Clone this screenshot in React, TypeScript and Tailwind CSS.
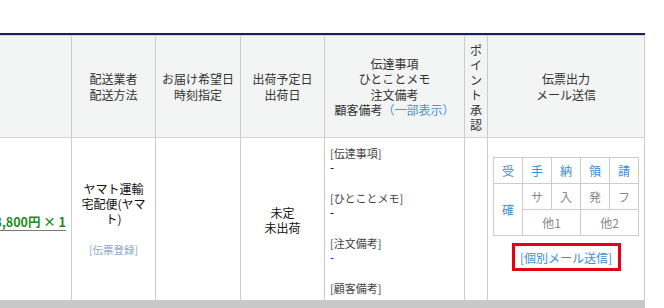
import React from "react";

const blue = "text-[#3a8ed4]";

function MiniCell({ children, className = "" }: { children: React.ReactNode; className?: string }) {
  return (
    <div className={"flex items-center justify-center border-r border-b border-[#cccccc] text-[12px] " + className}>
      {children}
    </div>
  );
}

export default function App() {
  return (
    <div className="w-[664px] h-[308px] overflow-hidden bg-white text-[#333] font-['Noto_Sans_CJK_JP','Noto_Sans',sans-serif]">
      <div className="h-[33px]" />
      <div className="w-[645px] h-[2px] bg-[#1e1f5e]" />
      {/* header row */}
      <div className="w-[645px] grid grid-cols-[72px_84px_85px_84px_140px_23px_157px] h-[103px] bg-[#f3f4f4] border-t border-b border-[#d4d4d4] text-[12px] leading-[15.5px] text-center">
        <div className="border-r border-[#cccccc]" />
        <div className="border-r border-[#cccccc] flex flex-col items-center justify-center">
          <div>配送業者</div>
          <div>配送方法</div>
        </div>
        <div className="border-r border-[#cccccc] flex flex-col items-center justify-center">
          <div>お届け希望日</div>
          <div>時刻指定</div>
        </div>
        <div className="border-r border-[#cccccc] flex flex-col items-center justify-center">
          <div>出荷予定日</div>
          <div>出荷日</div>
        </div>
        <div className="border-r border-[#cccccc] flex flex-col items-center justify-center">
          <div>伝達事項</div>
          <div>ひとことメモ</div>
          <div>注文備考</div>
          <div className="whitespace-nowrap">
            顧客備考<span className="text-[#4a95d2]">（一部表示）</span>
          </div>
        </div>
        <div className="border-r border-[#cccccc] flex flex-col items-center justify-center leading-[15px]">
          <div>ポ</div>
          <div>イ</div>
          <div>ン</div>
          <div>ト</div>
          <div>承</div>
          <div>認</div>
        </div>
        <div className="border-r border-[#cccccc] flex flex-col items-center justify-center">
          <div>伝票出力</div>
          <div>メール送信</div>
        </div>
      </div>
      {/* body row */}
      <div className="w-[645px] grid grid-cols-[72px_84px_85px_84px_140px_23px_157px] h-[162px] bg-white text-[12px] leading-[15px] text-[#111]">
        <div className="border-r border-[#cccccc] flex items-center justify-end pr-[5px] pt-[6px] overflow-visible">
          <span className="whitespace-nowrap border-b border-[#777] font-bold text-[#1d8a1d] text-[12.5px] leading-[17px]">
            3,800円 × 1
          </span>
        </div>
        <div className="border-r border-[#cccccc] flex flex-col items-center justify-center px-[6px] text-center">
          <div>ヤマト運輸</div>
          <div>宅配便(ヤマト)</div>
          <div className="mt-[16px] text-[10.5px] text-[#8ea7cb]">[伝票登録]</div>
        </div>
        <div className="border-r border-[#cccccc]" />
        <div className="border-r border-[#cccccc] flex flex-col items-center justify-center text-center pt-[1px]">
          <div>未定</div>
          <div>未出荷</div>
        </div>
        <div className="border-r border-[#cccccc] overflow-hidden pl-[5px] pt-[8px] text-[11px]">
          <div className="leading-[14px] text-[#444]">[伝達事項]</div>
          <div className="leading-[14px] mb-[17px] text-[12px] text-black">-</div>
          <div className="leading-[14px] text-[#444]">[ひとことメモ]</div>
          <div className="leading-[14px] mb-[17px] text-[12px] text-black">-</div>
          <div className="leading-[14px] text-[#444]">[注文備考]</div>
          <div className="leading-[14px] mb-[17px] text-[12px] text-[#1a1aff]">-</div>
          <div className="leading-[14px] text-[#444]">[顧客備考]</div>
          <div className="leading-[14px] text-[12px] text-black">-</div>
        </div>
        <div className="border-r border-[#cccccc]" />
        <div className="border-r border-[#cccccc] flex flex-col items-center pt-[19px]">
          <div className="grid grid-cols-[repeat(5,29px)] grid-rows-[repeat(3,26px)] w-[146px] border-l border-t border-[#cccccc]">
            <MiniCell className={blue}>受</MiniCell>
            <MiniCell className={blue}>手</MiniCell>
            <MiniCell className={blue}>納</MiniCell>
            <MiniCell className={blue}>領</MiniCell>
            <MiniCell className={blue}>請</MiniCell>
            <MiniCell className={"row-span-2 " + blue}>確</MiniCell>
            <MiniCell className="text-[#888]">サ</MiniCell>
            <MiniCell className="text-[#888]">入</MiniCell>
            <MiniCell className="text-[#888]">発</MiniCell>
            <MiniCell className="text-[#888]">フ</MiniCell>
            <MiniCell className="col-span-2 text-[#888]">他1</MiniCell>
            <MiniCell className="col-span-2 text-[#888]">他2</MiniCell>
          </div>
          <div className="mt-[7px] w-[109px] h-[28px] border-[3px] border-[#e60012] flex items-center justify-center">
            <span className={"text-[12px] whitespace-nowrap " + blue}>[個別メール送信]</span>
          </div>
        </div>
      </div>
      <div className="w-[645px] h-[8px] bg-[#c8c8c8]" />
    </div>
  );
}
